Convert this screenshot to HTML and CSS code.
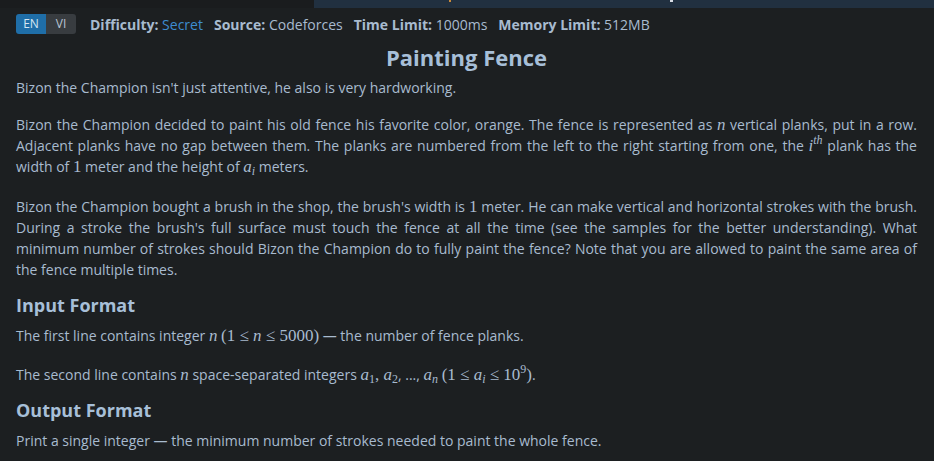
FILE: index.html
```html
<!DOCTYPE html>
<html>
<head>
<meta charset="utf-8">
<link rel="stylesheet" href="styles.css">
</head>
<body>
<div class="topstrip"><div class="strip-tab"><span class="mark-o"></span><span class="mark-w"></span></div></div>
<div class="page">
  <div class="meta">
    <div class="lang"><span class="lang-on">EN</span><span class="lang-off">VI</span></div>
    <span class="item"><b>Difficulty:</b> <span class="link">Secret</span></span>
    <span class="item"><b>Source:</b> Codeforces</span>
    <span class="item"><b>Time Limit:</b> 1000ms</span>
    <span class="item"><b>Memory Limit:</b> 512MB</span>
  </div>
  <h1 class="title">Painting Fence</h1>
  <p>Bizon the Champion isn't just attentive, he also is very hardworking.</p>
  <p class="p-tall">Bizon the Champion decided to paint his old fence his favorite color, orange. The fence is represented as <i class="m">n</i> vertical planks, put in a row. Adjacent planks have no gap between them. The planks are numbered from the left to the right starting from one, the <i class="m">i<sup>th</sup></i> plank has the width of <span class="m">1</span> meter and the height of <i class="m">a<sub>i</sub></i> meters.</p>
  <p>Bizon the Champion bought a brush in the shop, the brush's width is <span class="m">1</span> meter. He can make vertical and horizontal strokes with the brush. During a stroke the brush's full surface must touch the fence at all the time (see the samples for the better understanding). What minimum number of strokes should Bizon the Champion do to fully paint the fence? Note that you are allowed to paint the same area of the fence multiple times.</p>
  <h2>Input Format</h2>
  <p>The first line contains integer <i class="m">n</i> <span class="m">(1 ≤ <i>n</i> ≤ 5000)</span> — the number of fence planks.</p>
  <p class="p-sup">The second line contains <i class="m">n</i> space-separated integers <span class="m"><i>a</i><sub>1</sub>, <i>a</i><sub>2</sub></span>, ..., <span class="m"><i>a<sub>n</sub></i></span> <span class="m">(1 ≤ <i>a<sub>i</sub></i> ≤ 10<sup>9</sup>)</span>.</p>
  <h2>Output Format</h2>
  <p>Print a single integer — the minimum number of strokes needed to paint the whole fence.</p>
</div>
</body>
</html>
```
FILE: styles.css
```css
html, body {
  margin: 0;
  padding: 0;
  background: #1c1f21;
}
body {
  font-family: "Open Sans", "Noto Sans", sans-serif;
  color: #a8bbcf;
  font-size: 14px;
  line-height: 21px;
  overflow: hidden;
  height: 461px;
}
.topstrip {
  height: 8px;
  background: #1a1c1e;
  display: flex;
}
.strip-tab {
  margin-left: 314px;
  flex: 1;
  background: #213040;
  position: relative;
}
.mark-o {
  position: absolute;
  left: 135px;
  top: 0;
  width: 2px;
  height: 2px;
  background: #c98a3a;
}
.mark-w {
  position: absolute;
  left: 356px;
  top: 0;
  width: 3px;
  height: 2px;
  background: #d8dde4;
}
.page {
  padding: 0 17px 0 16px;
}
.meta {
  display: flex;
  align-items: center;
  gap: 11px;
  font-size: 14px;
  height: 32px;
}
.meta b {
  font-weight: 700;
}
.lang {
  display: flex;
  height: 20px;
  border-radius: 3px;
  overflow: hidden;
  font-size: 12px;
  line-height: 20px;
  margin-right: 3px;
}
.lang-on {
  background: #1f6ea8;
  color: #d6e6f3;
  width: 30px;
  text-align: center;
}
.lang-off {
  background: #383c40;
  color: #b8c6d4;
  width: 30px;
  text-align: center;
}
.link {
  color: #3e8cd0;
}
.title {
  font-size: 22px;
  font-weight: 700;
  text-align: center;
  color: #a7bfd8;
  margin: 2px 0 5px;
  line-height: 30px;
}
p {
  margin: 0 0 16px;
  text-align: justify;
}
p.p-tall {
  margin-bottom: 19px;
}
p.p-sup {
  padding-top: 2px;
}
h2 {
  font-size: 18px;
  font-weight: 700;
  color: #a7bfd8;
  margin: -2px 0 9px;
  line-height: 22px;
}
.m {
  font-family: "Liberation Serif", "DejaVu Serif", serif;
  font-size: 17px;
  font-style: normal;
}
i.m, .m i {
  font-style: italic;
}
sup, sub {
  font-size: 12px;
  line-height: 0;
  position: relative;
}
sup {
  vertical-align: baseline;
  top: -7px;
}
sub {
  vertical-align: baseline;
  top: 3px;
}
```
